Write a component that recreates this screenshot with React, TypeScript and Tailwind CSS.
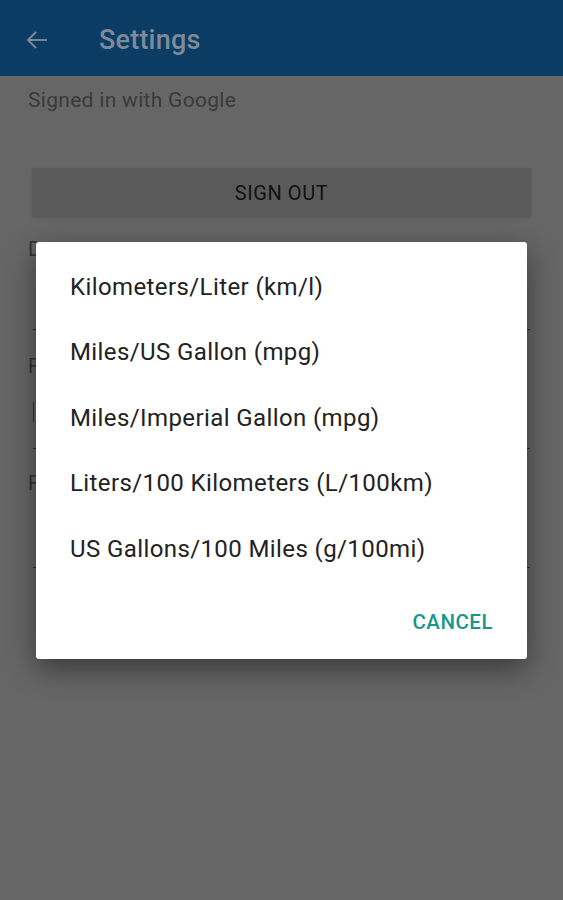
const options = [
  "Kilometers/Liter (km/l)",
  "Miles/US Gallon (mpg)",
  "Miles/Imperial Gallon (mpg)",
  "Liters/100 Kilometers (L/100km)",
  "US Gallons/100 Miles (g/100mi)",
];

export default function App() {
  return (
    <div
      className="relative w-[563px] h-[900px] overflow-hidden bg-[#666666]"
      style={{ fontFamily: "Roboto, 'Liberation Sans', sans-serif" }}
    >
      {/* Toolbar (dimmed) */}
      <header className="h-[76px] bg-[#0b3c64] flex items-center pt-[4px]">
        <svg
          className="ml-[25px] w-[24px] h-[24px] text-[#7a8796]"
          viewBox="0 0 24 24"
          fill="none"
          stroke="currentColor"
          strokeWidth="2"
        >
          <path d="M22 12H3M11 4l-8 8 8 8" />
        </svg>
        <h1 className="ml-[50px] text-[27px] font-medium text-[#7e8a99] tracking-[0.2px]">Settings</h1>
      </header>

      {/* Settings page behind the dialog */}
      <div className="flex flex-col px-[28px]">
        <p className="mt-[11px] text-[21px] leading-[26px] text-[#3a3a3a] tracking-[0.3px]">Signed in with Google</p>
        <button className="mt-[55px] mx-[4px] h-[49px] bg-[#5a5a5a] shadow-sm text-[20px] text-[#111] tracking-[0.6px]">
          SIGN OUT
        </button>

        <div className="ml-[5px] mr-[5px] h-[113px] border-b border-[#2a2a2a] pt-[20px]">
          <span className="-ml-[5px] text-[20px] leading-[24px] text-[#333]">D</span>
        </div>
        <div className="ml-[5px] mr-[5px] h-[119px] border-b border-[#2a2a2a] pt-[24px] flex flex-col">
          <span className="-ml-[5px] text-[20px] leading-[24px] text-[#333]">F</span>
          <span className="mt-[24px] w-[1px] h-[20px] bg-[#333]" />
        </div>
        <div className="ml-[5px] mr-[5px] h-[119px] border-b border-[#2a2a2a] pt-[22px]">
          <span className="-ml-[5px] text-[20px] leading-[24px] text-[#333]">F</span>
        </div>
      </div>

      {/* Units dialog */}
      <div className="absolute left-[36px] top-[242px] w-[491px] h-[417px] flex flex-col bg-white rounded-[3px] shadow-[0_10px_30px_rgba(0,0,0,0.45)]">
        <ul className="pt-[12px] flex flex-col">
          {options.map((o) => (
            <li key={o} className="h-[65.5px] flex items-center pl-[34px] text-[24px] tracking-[0.4px] text-[#222]">
              {o}
            </li>
          ))}
        </ul>
        <div className="flex justify-end pr-[34px] mt-[25px]">
          <button className="text-[20.5px] font-medium text-[#17978a] tracking-[0.5px]">CANCEL</button>
        </div>
      </div>
    </div>
  );
}
